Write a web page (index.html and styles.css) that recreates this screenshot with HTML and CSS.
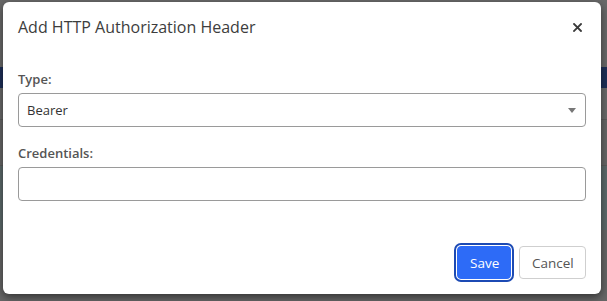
FILE: index.html
```html
<!DOCTYPE html>
<html>
<head>
<meta charset="utf-8">
<link rel="stylesheet" href="styles.css">
</head>
<body>
<div class="page">
  <div class="band band-top"></div>
  <div class="band band-navy"></div>
  <div class="band band-mid"></div>
  <div class="band band-gap"></div>
  <div class="band band-teal"></div>
  <div class="band band-bottom"></div>
</div>
<div class="modal">
  <div class="modal-header">
    <h4 class="modal-title">Add HTTP Authorization Header</h4>
    <button class="close" aria-label="Close">
      <svg width="9" height="9" viewBox="0 0 9 9"><path d="M1 1L8 8M8 1L1 8" stroke="#3a3a3a" stroke-width="1.8" stroke-linecap="square"/></svg>
    </button>
  </div>
  <div class="modal-body">
    <div class="group">
      <label class="label">Type:</label>
      <div class="select">
        <span>Bearer</span>
        <svg class="caret" width="8" height="5" viewBox="0 0 8 5"><path d="M0 0H8L4 5Z" fill="#777"/></svg>
      </div>
    </div>
    <div class="group">
      <label class="label">Credentials:</label>
      <div class="input"></div>
    </div>
  </div>
  <div class="modal-footer">
    <button class="btn btn-primary">Save</button>
    <button class="btn btn-default">Cancel</button>
  </div>
</div>
</body>
</html>
```
FILE: styles.css
```css
html, body {
  margin: 0;
  padding: 0;
  width: 607px;
  height: 301px;
  overflow: hidden;
  background: #666;
  font-family: "Open Sans", "Liberation Sans", sans-serif;
}
.page {
  display: flex;
  flex-direction: column;
  height: 301px;
}
.band { flex: none; }
.band-top { height: 67px; background: #696969; }
.band-navy { height: 21px; background: #1e2f58; }
.band-mid { height: 31px; background: #6a6a6a; border-bottom: 1px solid #5c5c5c; }
.band-gap { height: 45px; background: #676767; border-bottom: 1px solid #5c5c5c; }
.band-teal { height: 64px; background: #5c6a6b; }
.band-bottom { flex: 1; background: #666; }

.modal {
  position: absolute;
  left: 3px;
  top: 2px;
  width: 598px;
  height: 292px;
  background: #fff;
  border-radius: 6px;
  box-shadow: 0 3px 9px rgba(0,0,0,0.5);
  display: flex;
  flex-direction: column;
  box-sizing: border-box;
}
.modal-header {
  display: flex;
  align-items: center;
  justify-content: space-between;
  padding: 14px 19px 15px 15px;
}
.modal-title {
  margin: 0;
  font-size: 16px;
  font-weight: 400;
  line-height: 23px;
  color: #3d3d3d;
}
.close {
  border: 0;
  background: none;
  padding: 0;
  width: 9px;
  height: 9px;
  display: flex;
}
.modal-body {
  padding: 15px 15px 0 15px;
  display: flex;
  flex-direction: column;
  gap: 16px;
}
.group {
  display: flex;
  flex-direction: column;
  gap: 4px;
}
.label {
  font-size: 13px;
  font-weight: 600;
  line-height: 20px;
  color: #555;
}
.select, .input {
  height: 34px;
  box-sizing: border-box;
  border: 1px solid #9a9a9a;
  border-radius: 4px;
  display: flex;
  align-items: center;
  justify-content: space-between;
  padding: 0 9px 0 8px;
  font-size: 13px;
  color: #333;
}
.modal-footer {
  margin-top: auto;
  display: flex;
  justify-content: flex-end;
  gap: 8px;
  padding: 0 15px 15px 15px;
}
.btn {
  height: 33px;
  box-sizing: border-box;
  border-radius: 4px;
  font-family: "Open Sans", "Liberation Sans", sans-serif;
  font-size: 13.5px;
  padding: 0 12px;
}
.btn-primary {
  width: 54px;
  background: #2d6bf7;
  border: 1px solid #2d6bf7;
  color: #fff;
  box-shadow: 0 0 0 1px #fff, 0 0 0 3px #1c4ab4;
}
.btn-default {
  width: 67px;
  background: #fff;
  border: 1px solid #cfcfcf;
  color: #555;
}
```
